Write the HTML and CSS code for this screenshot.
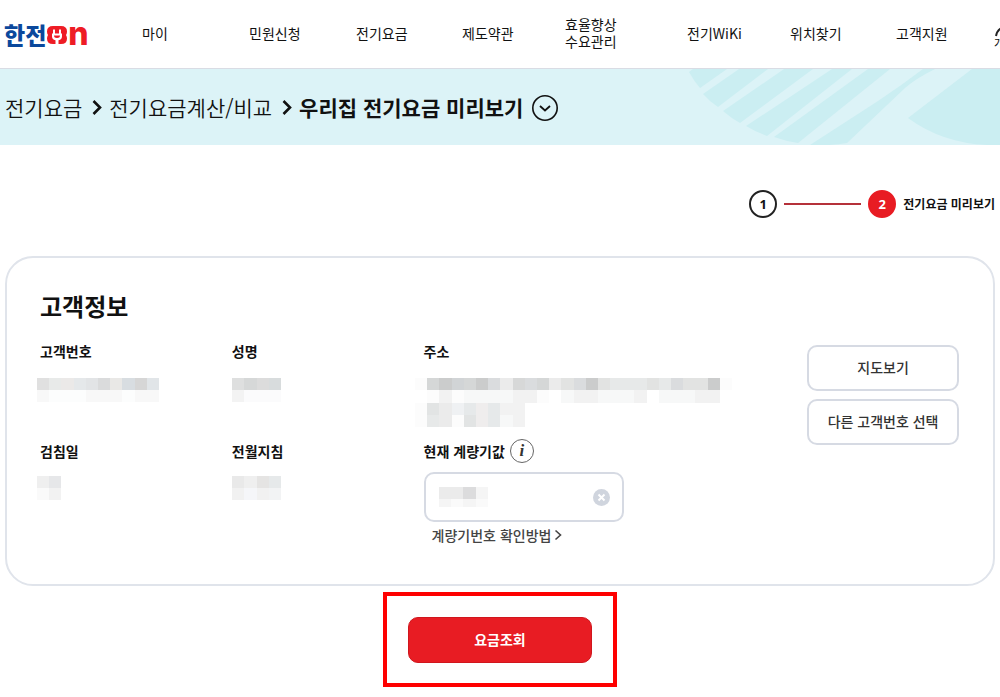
FILE: index.html
```html
<!DOCTYPE html>
<html lang="ko">
<head>
  <meta charset="UTF-8">
  <title>한전ON - 우리집 전기요금 미리보기</title>
  <meta name="viewport" content="width=device-width, initial-scale=1.0">
  <link rel="stylesheet" href="styles.css">
</head>
<body>
  <header class="header">
    <a href="#" class="logo" aria-label="한전ON">
      <span class="logo-kr">한전</span>
      <svg class="logo-plug" width="20" height="18" viewBox="0 0 20 18">
        <path d="M6 0h8q6 0 6 5.500 0 2-1 3.500 1 1.500 1 3.500 0 5.500-6 5.500H6q-6 0-6-5.500Q0 10.500 1 9 0 7.500 0 5.500 0 0 6 0z" fill="#ee1c25"/>
        <path d="M6 3.500h2v4h4v-4h2v4h1v3q0 3-3.500 3.800V18h-3v-3.700Q5 13.500 5 10.500v-3h1z" fill="#fff"/>
        <path d="M7 9.500h6q0 2.500-3 2.500t-3-2.500zM9.500 3h1v3h-1z" fill="#ee1c25"/>
      </svg>
      <span class="logo-n">n</span>
    </a>
    <nav class="nav">
      <a href="#">마이</a>
      <a href="#">민원신청</a>
      <a href="#">전기요금</a>
      <a href="#">제도약관</a>
      <a href="#">효율향상<br>수요관리</a>
      <a href="#">전기WiKi</a>
      <a href="#">위치찾기</a>
      <a href="#">고객지원</a>
    </nav>
    <a href="#" class="user">
      <svg width="20" height="12" viewBox="0 0 20 12">
        <path d="M2 11q1-7 8-9" fill="none" stroke="#222" stroke-width="2"/>
      </svg>
      <span>개인</span>
    </a>
  </header>

  <div class="band">
    <nav class="breadcrumb">
      <a href="#">전기요금</a>
      <svg width="10" height="18" viewBox="0 0 10 18"><path d="M1.500 3l6.500 6.500-6.500 6.500" fill="none" stroke="#111" stroke-width="2.600"/></svg>
      <a href="#">전기요금계산/비교</a>
      <svg width="10" height="18" viewBox="0 0 10 18"><path d="M1.500 3l6.500 6.500-6.500 6.500" fill="none" stroke="#111" stroke-width="2.600"/></svg>
      <h1>우리집 전기요금 미리보기</h1>
      <button class="more" type="button" aria-label="메뉴 펼치기">
        <svg width="26" height="26" viewBox="0 0 26 26" fill="none" stroke="#111">
          <circle cx="13" cy="13" r="12.200" stroke-width="1.600"/>
          <path d="M8 11l5 4.500 5-4.500" stroke-width="1.800"/>
        </svg>
      </button>
    </nav>
    <svg class="band-art" width="350" height="76" viewBox="0 0 350 76" fill="#cbeef2">
      <path d="M43 0H77L50 19Q44 12 39 3z"/>
      <path d="M89 0H118L68 38Q60 33 53 25z"/>
      <path d="M134 0H163L90 54Q81 49 73 42z"/>
      <path d="M182 0H202L117 67Q106 63 96 57z"/>
      <path d="M218 0H240L148 74Q135 72 124 68z"/>
      <path d="M273 0H285Q265 10 255 19L197 74Q180 77 160 76L228 32Q252 16 273 0z"/>
      <path d="M322 0H350V76H337Q292 74 258 49z"/>
    </svg>
  </div>

  <main class="content">
    <ol class="steps">
      <li class="step">1</li>
      <li class="step-line"></li>
      <li class="step active">2</li>
      <li class="step-name">전기요금 미리보기</li>
    </ol>

    <section class="card">
      <h2>고객정보</h2>
      <div class="info">
        <div class="field">
          <h3>고객번호</h3>
          <svg class="mosaic outdent" width="122" height="24" viewBox="0 0 10 2" preserveAspectRatio="none">
            <path fill="#e0e0e0" d="M0 0h1v1h-1z"/><path fill="#e8eae9" d="M1 0h1v1h-1z"/>
            <path fill="#ebe9e8" d="M2 0h1v1h-1z"/><path fill="#e5e8ea" d="M3 0h1v1h-1z"/>
            <path fill="#e2e4e6" d="M4 0h1v1h-1z"/><path fill="#dadbdc" d="M5 0h1v1h-1z"/>
            <path fill="#e9e8e6" d="M6 0h1v1h-1z"/><path fill="#d8dde1" d="M7 0h1v1h-1z"/>
            <path fill="#d6d6d6" d="M8 0h1v1h-1z"/><path fill="#e1e5e8" d="M9 0h1v1h-1z"/>
            <path fill="#f8f8f8" d="M0 1h1v1h-1zM4 1h3v1h-3zM8 1h2v1h-2z"/>
            <path fill="#fcfdfd" d="M1 1h3v1h-3zM7 1h1v1h-1z"/>
          </svg>
        </div>
        <div class="field">
          <h3>성명</h3>
          <svg class="mosaic" width="49" height="24" viewBox="0 0 4 2" preserveAspectRatio="none">
            <path fill="#dedfdf" d="M0 0h1v1h-1z"/><path fill="#d6d8d8" d="M1 0h1v1h-1z"/>
            <path fill="#dcdcdc" d="M2 0h1v1h-1z"/><path fill="#d8dcdd" d="M3 0h1v1h-1z"/>
            <path fill="#f3f3f3" d="M0 1h1v1h-1z"/><path fill="#fbfbfc" d="M1 1h3v1h-3z"/>
          </svg>
        </div>
        <div class="field">
          <h3>주소</h3>
          <svg class="mosaic address" width="317" height="49" viewBox="0 0 26 4" preserveAspectRatio="none">
            <path fill="#fcfcfc" d="M0 0h1v1h-1zM25 0h1v1h-1zM0 2h1v2h-1zM1 1h1v1h-1zM10 1h1v1h-1zM3 3h1v1h-1zM3 1h1v1h-1z"/>
            <path fill="#d5d7d7" d="M1 0h1v1h-1zM4 0h1v1h-1zM10 0h1v1h-1z"/>
            <path fill="#cbcccc" d="M2 0h1v1h-1zM5 0h1v1h-1zM14 0h1v1h-1zM24 0h1v1h-1z"/>
            <path fill="#d1d4d6" d="M3 0h1v1h-1z"/>
            <path fill="#dadcde" d="M6 0h1v1h-1zM9 0h1v1h-1zM13 0h1v1h-1zM21 0h1v1h-1z"/>
            <path fill="#d7d8d8" d="M8 0h1v1h-1z"/>
            <path fill="#ebebeb" d="M7 0h1v1h-1zM11 0h1v1h-1zM2 2h1v2h-1zM5 3h1v1h-1z"/>
            <path fill="#e2e3e2" d="M12 0h1v1h-1zM15 0h1v1h-1zM19 0h1v1h-1zM22 0h2v1h-2z"/>
            <path fill="#e7e9e9" d="M16 0h3v1h-3zM20 0h1v1h-1zM1 3h1v1h-1z"/>
            <path fill="#f2f2f2" d="M2 1h1v1h-1zM8 1h2v1h-2zM13 1h2v1h-2zM18 1h1v1h-1zM23 1h2v1h-2zM7 2h1v1h-1zM8 2h1v2h-1z"/>
            <path fill="#f7f8f8" d="M4 1h4v1h-4zM12 1h1v1h-1zM15 1h3v1h-3zM20 1h3v1h-3zM7 3h1v1h-1z"/>
            <path fill="#e2e4e4" d="M1 2h1v1h-1zM4 3h1v1h-1z"/>
            <path fill="#eff1f3" d="M3 2h1v1h-1z"/>
            <path fill="#e6e9ea" d="M4 2h1v1h-1zM6 2h1v2h-1z"/>
            <path fill="#efeded" d="M5 2h1v2h-1z"/>
          </svg>
        </div>
        <div class="field">
          <h3>검침일</h3>
          <svg class="mosaic low outdent" width="24" height="24" viewBox="0 0 2 2">
            <path fill="#efefef" d="M0 0h1v1h-1z"/><path fill="#e6e7e9" d="M1 0h1v1h-1z"/>
            <path fill="#fafafa" d="M0 1h1v1h-1z"/><path fill="#f2f2f2" d="M1 1h1v1h-1z"/>
          </svg>
        </div>
        <div class="field">
          <h3>전월지침</h3>
          <svg class="mosaic low" width="49" height="24" viewBox="0 0 4 2" preserveAspectRatio="none">
            <path fill="#e9e9e9" d="M0 0h1v1h-1z"/><path fill="#efefef" d="M1 0h1v1h-1z"/>
            <path fill="#e5e4e3" d="M2 0h1v1h-1z"/><path fill="#e6e9ea" d="M3 0h1v1h-1z"/>
            <path fill="#f1f1f1" d="M0 1h1v1h-1zM2 1h1v1h-1z"/><path fill="#f5f6f9" d="M1 1h1v1h-1z"/>
            <path fill="#f2f3f4" d="M3 1h1v1h-1z"/>
          </svg>
        </div>
        <div class="field meter">
          <div class="meter-label">
            <label for="meter">현재 계량기값</label>
            <button class="tip" type="button" aria-label="도움말">i</button>
          </div>
          <div class="meter-box">
            <svg class="meter-mosaic" width="49" height="20" viewBox="0 0 49 20">
              <path fill="#ebebeb" d="M0 0h24v12h-24z"/><path fill="#dcdcdd" d="M24 0h13v12h-13z"/>
              <path fill="#f5f5f5" d="M37 0h12v12h-12zM0 12h12v8h-12zM24 12h13v8h-13z"/>
              <path fill="#fafafa" d="M12 12h12v8h-12zM37 12h12v8h-12z"/>
            </svg>
            <input type="text" id="meter">
            <button class="clear" type="button" aria-label="지우기">
              <svg width="17" height="17" viewBox="0 0 17 17">
                <circle cx="8.500" cy="8.500" r="8.500" fill="#d0d5de"/>
                <path d="M5.500 5.500l6 6M11.500 5.500l-6 6" stroke="#fff" stroke-width="2"/>
              </svg>
            </button>
          </div>
          <a href="#" class="how">계량기번호 확인방법
            <svg width="8" height="12" viewBox="0 0 8 12"><path d="M1.500 1.500L6.500 6l-5 4.500" fill="none" stroke="#444" stroke-width="1.600"/></svg>
          </a>
        </div>
        <div class="actions">
          <button type="button">지도보기</button>
          <button type="button">다른 고객번호 선택</button>
        </div>
      </div>
    </section>

    <div class="submit-area">
      <button class="submit" type="button">요금조회</button>
    </div>
  </main>
</body>
</html>
```
FILE: styles.css
```css
* {
  box-sizing: border-box;
}

body {
  margin: 0;
  font-family: "Noto Sans CJK KR", "Noto Sans", sans-serif;
  font-size: 14px;
  line-height: 20px;
  color: #111;
  background: #fff;
  overflow-x: hidden;
}

a {
  color: inherit;
  text-decoration: none;
}

h1, h2, h3, ol {
  margin: 0;
  padding: 0;
}

button {
  font-family: inherit;
  cursor: pointer;
}

svg {
  display: block;
  flex: none;
}

/* header */
.header {
  display: flex;
  align-items: center;
  height: 69px;
  border-bottom: 1px solid #d9dce4;
}

.logo {
  display: flex;
  align-items: center;
  width: 142px;
  padding-left: 4px;
  flex: none;
}

.logo-kr {
  color: #0b489c;
  font-size: 23px;
  font-weight: 900;
}

.logo-plug {
  margin: 2px 1px 0;
}

.logo-n {
  color: #ee1c25;
  font-family: Inter, sans-serif;
  font-size: 32px;
  font-weight: 800;
  line-height: 32px;
}

.nav {
  flex: 1;
  display: grid;
  grid-template-columns: 107fr 107fr 106fr 103fr 122fr 103fr 106fr 98fr;
  align-items: center;
  line-height: 17px;
  padding-bottom: 2px;
}

.user {
  width: 6px;
  overflow: hidden;
  white-space: nowrap;
  font-size: 12px;
  line-height: 12px;
  padding-top: 6px;
}

/* breadcrumb band */
.band {
  display: flex;
  justify-content: space-between;
  height: 76px;
  background: #dcf3f7;
}

.breadcrumb {
  display: flex;
  align-items: center;
  padding-left: 5px;
  font-size: 21px;
  font-weight: 350;
  white-space: nowrap;
}

.breadcrumb > svg {
  margin: 0 7px 0 10px;
}

.breadcrumb h1 {
  font-size: 21px;
  font-weight: 700;
}

.more {
  margin-left: 9px;
  padding: 2px 0 0;
  border: 0;
  background: none;
}

.band-art {
  margin-left: -40px;
}

/* steps */
.content {
  padding: 45px 5px 0;
}

.steps {
  display: flex;
  justify-content: flex-end;
  align-items: center;
  list-style: none;
}

.step {
  width: 28px;
  height: 28px;
  border: 2px solid #222;
  border-radius: 50%;
  line-height: 24px;
  text-align: center;
  font-family: "Noto Sans", sans-serif;
  font-size: 13px;
  font-weight: 700;
}

.step.active {
  color: #fff;
  background: #e81c23;
  border-color: #e81c23;
}

.step-line {
  width: 77px;
  height: 2px;
  margin: 0 7px;
  background: #b5313a;
}

.step-name {
  margin-left: 7px;
  font-size: 12px;
  font-weight: 700;
}

/* customer card */
.card {
  margin-top: 38px;
  padding: 34px 34px 39px 33px;
  border: 2px solid #e0e4eb;
  border-radius: 28px;
}

.card h2 {
  font-size: 24px;
  font-weight: 700;
  line-height: 28px;
}

.info {
  display: grid;
  grid-template-columns: 192fr 192fr 384fr 152fr;
  grid-template-rows: 100px auto;
  margin-top: 21px;
}

.field h3,
.field label {
  font-size: 14px;
  font-weight: 700;
}

.mosaic {
  margin-top: 17px;
  shape-rendering: crispEdges;
}

.mosaic.low {
  margin-top: 15px;
}

.mosaic.outdent {
  margin-left: -3px;
}

.mosaic.address {
  margin-left: -9px;
}

.meter-label {
  display: flex;
  align-items: center;
  height: 20px;
}

.tip {
  width: 24px;
  height: 24px;
  margin-left: 5px;
  padding: 0;
  border: 1px solid #666;
  border-radius: 50%;
  background: #fff;
  color: #333;
  font: italic bold 17px "Liberation Serif", serif;
}

.meter-box {
  display: flex;
  align-items: center;
  width: 200px;
  height: 50px;
  margin-top: 11px;
  padding: 0 12px 0 13px;
  border: 2px solid #d6dae3;
  border-radius: 10px;
}

.meter-mosaic {
  shape-rendering: crispEdges;
}

.meter-box input {
  flex: 1;
  min-width: 0;
  border: 0;
  outline: 0;
  font-size: 14px;
}

.clear {
  padding: 0;
  border: 0;
  background: none;
}

.how {
  display: flex;
  align-items: center;
  gap: 3px;
  margin: 3px 0 0 8px;
  color: #444;
  font-weight: 500;
}

.actions {
  grid-column: 4;
  grid-row: 1;
  display: flex;
  flex-direction: column;
  gap: 8px;
  padding-top: 4px;
}

.actions button {
  flex: none;
  height: 46px;
  padding-bottom: 3px;
  border: 2px solid #d6dae3;
  border-radius: 10px;
  background: #fff;
  color: #333;
  font-size: 14px;
  font-weight: 500;
}

/* submit */
.submit-area {
  width: 234px;
  margin: 6px auto 0;
  padding: 21px 21px 20px;
  border: 4px solid #fe0000;
}

.submit {
  display: block;
  width: 100%;
  height: 46px;
  padding-bottom: 3px;
  border: 1px solid #d0161d;
  border-radius: 10px;
  background: #e81c23;
  color: #fff;
  font-size: 14px;
  font-weight: 700;
}
```
